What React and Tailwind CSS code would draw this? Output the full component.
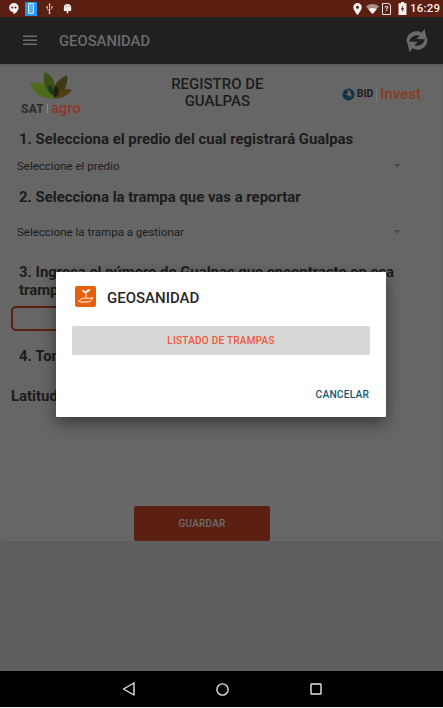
import React from 'react';

const roboto = { fontFamily: 'Roboto, sans-serif' };

function StatusIcons() {
  return (
    <div className="flex items-center pl-[8px]">
      {/* hangouts bubble */}
      <svg width="12" height="13" viewBox="0 0 11 13"><path d="M5.500 1a4.600 4.600 0 0 0-.6 9.200V12.400c2.600-1.200 5.200-3.600 5.200-6.800A4.600 4.600 0 0 0 5.500 1z" fill="#f4f0ee" /><circle cx="3.800" cy="5.500" r="1" fill="#5c2013" /><circle cx="7" cy="5.500" r="1" fill="#5c2013" /></svg>
      {/* phone on blue */}
      <div className="ml-[5px] w-[12px] h-[14px] bg-[#2196f3] flex items-center justify-center">
        <div className="w-[6px] h-[11px] border border-[#d7ecfb] rounded-[1px] bg-[#5ab0f2]" />
      </div>
      <svg width="9" height="13" viewBox="0 0 10 13" className="ml-[8px]"><path d="M5 0.500 3.800 2.500h.8v6.200L2.600 7V5.600h.6V4H1.500v1.600h.5v1.700l2.600 2.300v1.100a1 1 0 1 0 .9 0V8.300l2.500-1.600V5.500h.6V4H6.900v1.500h.5v.9L5.500 7.500V2.500h.7z" fill="#e8dfdb" /></svg>
      <svg width="9" height="13" viewBox="0 0 11 13" className="ml-[9px]"><path d="M1 5.500a4.500 4.500 0 0 1 9 0v2.700a1.500 1.500 0 0 1-1.500 1.500H6.500v2.500h-2V9.700H2.500A1.500 1.500 0 0 1 1 8.200z" fill="#f2ecea" /><circle cx="3.700" cy="4" r=".6" fill="#5c2013" /><circle cx="7.300" cy="4" r=".6" fill="#5c2013" /></svg>
    </div>
  );
}

function StatusRight() {
  return (
    <div className="flex items-center">
      <svg width="9" height="12" viewBox="0 0 9 12" className="mr-[4px]"><path d="M4.500 0a4.200 4.200 0 0 0-4.200 4.200C.3 7.300 4.500 12 4.500 12s4.200-4.700 4.200-7.800A4.200 4.200 0 0 0 4.500 0z" fill="#f7f3f1" /><circle cx="4.500" cy="4.200" r="1.500" fill="#5c2013" /></svg>
      <svg width="13" height="10" viewBox="0 0 13 10" className="mr-[3px]"><path d="M0 2.500C3.500-.8 9.500-.8 13 2.500L6.500 10z" fill="#a88f88" /><path d="M2.500 5.400c2.300-1.800 5.700-1.800 8 0L6.500 10z" fill="#f4f0ee" /></svg>
      <div className="w-[9px] h-[12px] mr-[7px] border border-[#e8e0dd] rounded-tr-[3px] flex items-center justify-center text-[#e8e0dd] text-[8px] leading-none font-bold">?</div>
      <svg width="9" height="13" viewBox="0 0 8 13" className="mr-[3px]"><path d="M2.500 0h3v1.200H8V13H0V1.200h2.500z" fill="#f4f0ee" /><path d="M4.700 3 2.300 7.400h1.500L3.300 10.500l2.400-4.300H4.200z" fill="#5c2013" /></svg>
      <span className="w-[27px] text-[11.500px] font-medium leading-none text-[#f4f0ee] tracking-[0.2px]">16:29</span>
    </div>
  );
}

function SatAgroLogo() {
  return (
    <div className="w-[60px] flex flex-col items-center">
      <svg width="43" height="28" viewBox="0 0 44 28">
        <path d="M0 12C6 9 16 10 22 21 C24 24 27 26 25 27 C13 28 4 22 0 12z" fill="#4e6b1c" />
        <path d="M15 0C23 3 27 10 25 22 L23 24 C16 19 12 9 15 0z" fill="#3c5214" />
        <path d="M38 3C39 11 36 20 27 26 L24 24 C22 15 28 7 38 3z" fill="#3d3a14" />
        <path d="M43 18C37 25 30 28 24 26 C26 20 34 15 43 18z" fill="#4f3d16" />
        <path d="M22 14C24 17 25 20 24.500 24 C21 23 18 18 18 14 20 13 21 13 22 14z" fill="#1a3a24" />
        <path d="M26 14C29 15 31 19 28 24 L25 26 C24 21 24 17 26 14z" fill="#221e0c" />
      </svg>
      <div className="flex items-baseline mt-[2px] leading-none">
        <span className="text-[12px] font-bold text-[#2c2c2c] tracking-[0.3px]">SAT</span>
        <span className="w-px h-[9px] bg-[#8a8a8a] mx-[3px]" />
        <span className="text-[14.500px] font-medium text-[#8f3626] tracking-[0.2px]">agro</span>
      </div>
    </div>
  );
}

function BidInvestLogo() {
  return (
    <div className="flex items-center">
      <svg width="13" height="13" viewBox="0 0 11 12" className="mr-[2px]">
        <circle cx="5.500" cy="6" r="5.500" fill="#12324a" />
        <path d="M3 1c1.500 1 2 1.800 2 3S3.500 5.500 3 6c1 .5 3.500.8 4.500 3 .7-2 1-3.500 0-5C7 3 5 1.300 3 1z" fill="#666666" />
      </svg>
      <span className="text-[10.500px] font-bold leading-none text-[#1d1d1d]">BID</span>
      <span className="w-px h-[15px] bg-[#777] mx-[3px]" />
      <span className="text-[15px] font-medium leading-none text-[#8a3a22]">Invest</span>
    </div>
  );
}

function Select({ label }) {
  return (
    <div className="flex items-center justify-between pl-[17px] pr-[43px]">
      <span className="text-[11.500px] leading-[14px] text-[#1c1c1c]">{label}</span>
      <span className="w-0 h-0 border-x-[3.500px] border-x-transparent border-t-[4px] border-t-[#4a4a4a]" />
    </div>
  );
}

function NavBar() {
  return (
    <div className="h-[36px] bg-black flex items-center justify-center gap-[81px]">
      <svg width="13" height="14" viewBox="0 0 13 14"><path d="M12 1 1.500 7 12 13z" fill="none" stroke="#e4e4e4" strokeWidth="1.400" strokeLinejoin="round" /></svg>
      <svg width="13" height="13" viewBox="0 0 13 13"><circle cx="6.500" cy="6.500" r="5.600" fill="none" stroke="#e4e4e4" strokeWidth="1.400" /></svg>
      <svg width="12" height="12" viewBox="0 0 12 12"><rect x="1" y="1" width="10" height="10" rx=".5" fill="none" stroke="#e4e4e4" strokeWidth="1.400" /></svg>
    </div>
  );
}

function Dialog() {
  return (
    <div className="absolute left-[56px] top-[272px] w-[330px] h-[145px] bg-white shadow-[0_6px_16px_rgba(0,0,0,0.45)] rounded-[1px] px-[16px] pt-[14px]">
      <div className="flex items-center pl-[3px]">
        <div className="w-[21px] h-[21px] bg-[#e85f0c] rounded-[2px] flex items-center justify-center">
          <svg width="17" height="17" viewBox="0 0 17 17" fill="none" stroke="#fff" strokeWidth="1">
            <path d="M1.500 13c2-.3 2.500-3 6-3 2.500 0 4 .5 5.500 .3 1.500 0 2-.6 2.500-.8-.3 2-2 4-4 4.500H4c-1 0-2-.3-2.500-1z" />
            <path d="M9 9V4M9 5C7.500 5 6 4 5.500 2.500 7.500 2.500 8.500 3.500 9 5zM9 4C9.500 2.500 11 1.500 13 1.500 12.500 3.200 11 4 9 4z" fill="#fff" />
          </svg>
        </div>
        <span className="ml-[11px] mt-[3px] text-[15px] font-medium leading-none text-[#262626]">GEOSANIDAD</span>
      </div>
      <div className="mt-[19px] h-[29px] bg-[#d7d7d7] rounded-[2px] flex items-center justify-center text-[10px] font-medium tracking-[0.25px] text-[#f0583a]">
        LISTADO DE TRAMPAS
      </div>
      <div className="mt-[35px] flex justify-end pr-[1px] text-[10.200px] leading-none font-medium tracking-[0.2px] text-[#0f5a75]">
        CANCELAR
      </div>
    </div>
  );
}

export default function App() {
  const heading = 'pl-[19px] text-[14.900px] font-bold leading-[18px] text-[#1c1c1c]';
  return (
    <div className="relative w-[443px] h-[708px] overflow-hidden flex flex-col bg-[#5f5f5f]" style={roboto}>
      {/* status bar */}
      <div className="h-[17px] bg-[#5c2013] flex items-center justify-between pr-[6px]">
        <StatusIcons />
        <StatusRight />
      </div>

      {/* app bar */}
      <div className="h-[47px] bg-[#202020] flex items-center pl-[23px] pr-[15px]">
        <svg width="14" height="11" viewBox="0 0 14 11" fill="#6e6e6e"><rect y="0.500" width="14" height="1.500" /><rect y="4.500" width="14" height="1.500" /><rect y="8.500" width="14" height="1.500" /></svg>
        <span className="ml-[22px] mt-[2px] text-[14.800px] font-medium text-[#6b6b6b]">GEOSANIDAD</span>
        <svg className="ml-auto" width="22" height="25" viewBox="0 0 22 24" fill="#6a6a6a">
          <path d="M0.500 13C0.500 7 5 2.800 10.500 2.800c2 0 3.500 .5 5 1.400L18.500 .5l2.500 10.500-10.500-.5 3-3.200C12 6.500 10 6.700 8.500 7.300 5.500 8.300 3.500 10.500 2.500 15z" />
          <path d="M21.500 11c0 6-4.500 10.200-10 10.200-2 0-3.500-.5-5-1.400L3.500 23.500 1 13l10.500 .5-3 3.200c1.500 .8 3.500 .6 5 0 3-1 5-3.200 6-7.700z" />
        </svg>
      </div>

      {/* form */}
      <div className="h-[477px] bg-[#666666] flex flex-col shadow-[inset_0_2px_2px_rgba(0,0,0,0.12)]">
        <div className="h-[61px] flex items-center pl-[21px] pr-[22px]">
          <SatAgroLogo />
          <div className="flex-1 text-center text-[15px] font-medium leading-[17px] text-[#1c1c1c] -mt-[4px] pl-[12px]">
            REGISTRO DE<br />GUALPAS
          </div>
          <BidInvestLogo />
        </div>
        <h2 className={`mt-[5px] ${heading}`}>1. Selecciona el predio del cual registrará Gualpas</h2>
        <div className="mt-[11px]"><Select label="Seleccione el predio" /></div>
        <h2 className={`mt-[15px] ${heading}`}>2. Selecciona la trampa que vas a reportar</h2>
        <div className="mt-[19px]"><Select label="Seleccione la trampa a gestionar" /></div>
        <h2 className={`mt-[24px] pr-[20px] ${heading}`}>3. Ingresa el número de Gualpas que encontraste en esa trampa</h2>
        <div className="mt-[7px] ml-[11px] w-[330px] h-[25px] border-2 border-[#5c2013] rounded-[5px]" />
        <h2 className={`mt-[16px] ${heading}`}>4. Toma la ubicación</h2>
        <div className="mt-[22px] pl-[11px] text-[14.900px] font-bold leading-[18px] text-[#1c1c1c]">Latitud</div>
        <div className="mt-[101px] ml-[134px] w-[136px] h-[35px] bg-[#5c2013] rounded-[2px] flex items-center justify-center text-[10px] font-medium text-[#6d6d6d] tracking-[0.2px]">
          GUARDAR
        </div>
      </div>

      <div className="flex-1" />
      <NavBar />
      <div className="h-px bg-[#f4f4f4]" />

      <Dialog />
    </div>
  );
}
